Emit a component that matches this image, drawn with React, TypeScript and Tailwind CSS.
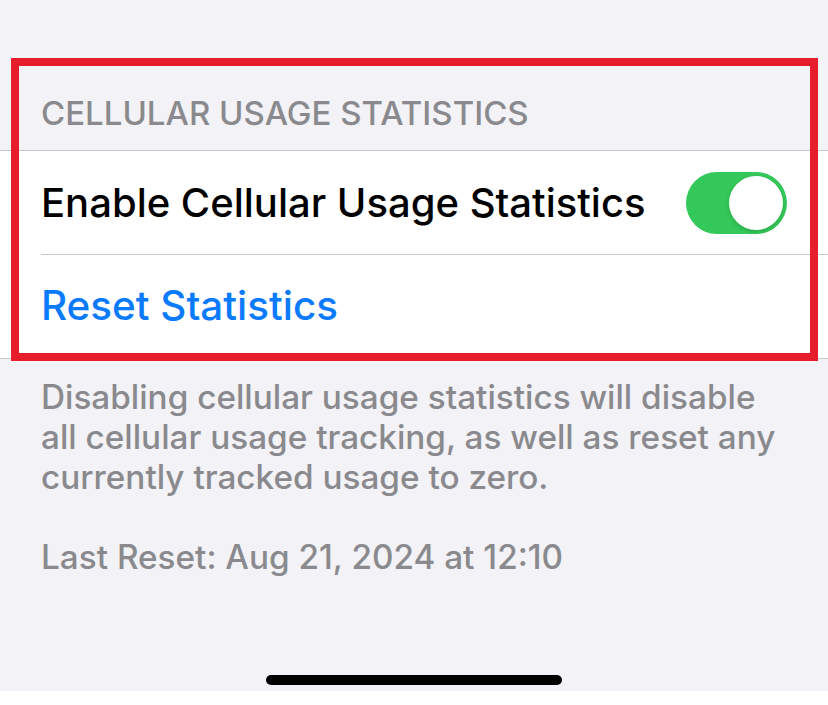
export default function App() {
  return (
    <div
      className="relative flex h-[705px] w-[828px] flex-col overflow-hidden bg-[#f2f2f7]"
      style={{ fontFamily: 'Inter, "Noto Sans", sans-serif' }}
    >
      {/* section header */}
      <div className="flex h-[150px] items-end px-[41px] pb-[17px]">
        <span className="text-[33px] font-medium leading-[40px] text-[#8a8a8e]">
          CELLULAR USAGE STATISTICS
        </span>
      </div>

      {/* grouped list */}
      <div className="border-y border-[#c8c8cc] bg-white">
        <div className="flex h-[103px] items-center justify-between pl-[41px] pr-[41px]">
          <span className="text-[40px] font-medium text-black">
            Enable Cellular Usage Statistics
          </span>
          <div className="flex h-[62px] w-[101px] items-center justify-end rounded-full bg-[#34c759] p-[4px]">
            <div className="h-[54px] w-[54px] rounded-full bg-white shadow-[0_2px_4px_rgba(0,0,0,0.15)]" />
          </div>
        </div>
        <div className="ml-[41px] border-t border-[#c8c8cc]" />
        <div className="flex h-[103px] items-center pl-[41px]">
          <span className="text-[40.4px] font-medium text-[#0a7aff]">Reset Statistics</span>
        </div>
      </div>

      {/* footer */}
      <div className="px-[41px] pt-[18px] text-[33.3px] font-medium leading-[40px] text-[#8a8a8e]">
        <p>
          Disabling cellular usage statistics will disable all cellular usage tracking, as well
          as reset any currently tracked usage to zero.
        </p>
        <p className="mt-[40px]">Last Reset: Aug 21, 2024 at 12:10</p>
      </div>

      <div className="flex-1" />

      {/* home indicator */}
      <div className="flex justify-center pb-[6px]">
        <div className="h-[10px] w-[296px] rounded-full bg-black" />
      </div>
      <div className="h-[14px] bg-white" />

      {/* annotation box */}
      <div className="pointer-events-none absolute left-[11px] top-[58px] h-[303px] w-[807px] border-[8px] border-[#e61e2b]" />
    </div>
  );
}
